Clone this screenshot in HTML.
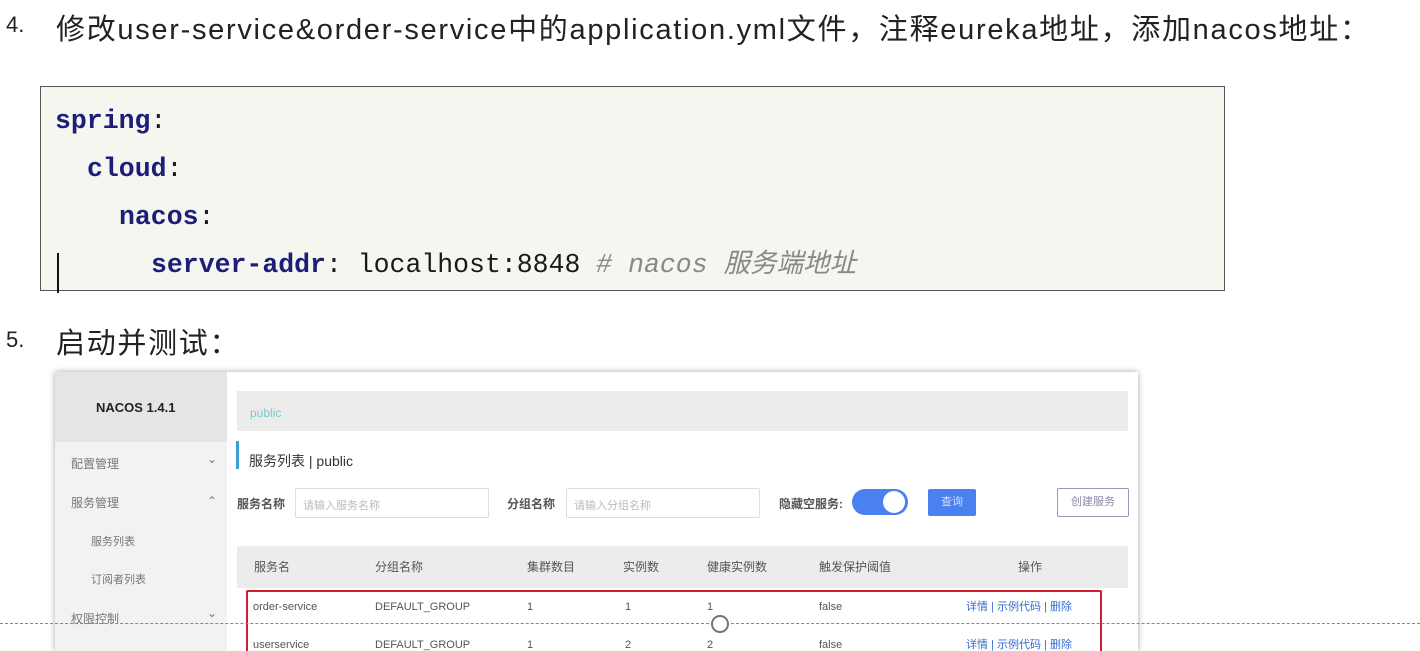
<!DOCTYPE html>
<html style="height:651px;overflow:hidden"><head><meta charset="utf-8"><style>
body{margin:0;width:1420px;height:651px;background:#fff;position:relative;overflow:hidden;font-family:"Liberation Sans","Noto Sans CJK SC",sans-serif;color:#222}
.a{position:absolute;white-space:nowrap}
.h{font-size:29px;color:#222;letter-spacing:1.7px}
.code{position:absolute;left:40px;top:86px;width:1183px;height:203px;border:1px solid #555;background:#f5f6ef}
.code div{position:absolute;font-family:"Liberation Mono","Noto Sans CJK SC",monospace;font-size:26.5px;line-height:32px;height:32px;white-space:pre;color:#1a1a1a}
.k{color:#1d1d7a;font-weight:bold}
.c{color:#888;font-style:italic}
.s{font-size:12px;color:#555;line-height:12px}
.side{color:#777;font-size:12px}
</style></head><body>
<div class="a" style="left:6px;top:12px;font-size:22px">4.</div>
<div class="a h" style="left:56px;top:6px">修改user-service&amp;order-service中的application.yml文件，注释eureka地址，添加nacos地址：</div>
<div class="code">
<div style="left:14px;top:18px"><span class="k">spring</span>:</div>
<div style="left:46px;top:66px"><span class="k">cloud</span>:</div>
<div style="left:78px;top:114px"><span class="k">nacos</span>:</div>
<div style="left:110px;top:162px"><span class="k">server-addr</span>: localhost:8848 <span class="c"># nacos 服务端地址</span></div>
<div style="left:16px;top:166px;width:2px;height:40px;background:#111"></div>
</div>
<div class="a" style="left:6px;top:327px;font-size:22px">5.</div>
<div class="a h" style="left:56px;top:320px">启动并测试：</div>

<div class="a" style="left:55px;top:372px;width:1083px;height:279px;background:#fff;box-shadow:0 0 6px rgba(0,0,0,.35)"></div>
<div class="a" style="left:55px;top:372px;width:172px;height:279px;background:#f2f2f2"></div>
<div class="a" style="left:55px;top:372px;width:172px;height:70px;background:#e5e5e5"></div>
<div class="a" style="left:96px;top:400px;font-size:13px;font-weight:bold;color:#222">NACOS 1.4.1</div>
<div class="a side" style="left:71px;top:455px">配置管理</div><div class="a side" style="left:207px;top:452px">⌄</div>
<div class="a side" style="left:71px;top:494px">服务管理</div><div class="a side" style="left:207px;top:494px">⌃</div>
<div class="a side" style="left:91px;top:533px;font-size:11px">服务列表</div>
<div class="a side" style="left:91px;top:571px;font-size:11px">订阅者列表</div>
<div class="a side" style="left:71px;top:610px">权限控制</div><div class="a side" style="left:207px;top:606px">⌄</div>

<div class="a" style="left:237px;top:391px;width:891px;height:40px;background:#ececec"></div>
<div class="a" style="left:250px;top:406px;font-size:12px;color:#7cc">public</div>
<div class="a" style="left:236px;top:441px;width:3px;height:28px;background:#3aa0d0"></div>
<div class="a" style="left:249px;top:451px;font-size:14px;color:#333">服务列表 | public</div>
<div class="a s" style="left:237px;top:498px;font-weight:bold">服务名称</div>
<div class="a" style="left:295px;top:488px;width:192px;height:28px;border:1px solid #ddd;border-radius:2px"></div>
<div class="a" style="left:303px;top:497px;font-size:11px;color:#bbb">请输入服务名称</div>
<div class="a s" style="left:507px;top:498px;font-weight:bold">分组名称</div>
<div class="a" style="left:566px;top:488px;width:192px;height:28px;border:1px solid #ddd;border-radius:2px"></div>
<div class="a" style="left:574px;top:497px;font-size:11px;color:#bbb">请输入分组名称</div>
<div class="a s" style="left:779px;top:498px;font-weight:bold">隐藏空服务:</div>
<div class="a" style="left:852px;top:489px;width:56px;height:26px;border-radius:13px;background:#4a80f0"></div>
<div class="a" style="left:883px;top:491px;width:22px;height:22px;border-radius:50%;background:#fff"></div>
<div class="a" style="left:928px;top:489px;width:48px;height:27px;background:#4a80f0;border-radius:2px;color:#dde;font-size:11px;text-align:center;line-height:27px">查询</div>
<div class="a" style="left:1057px;top:488px;width:70px;height:27px;border:1px solid #99b;border-radius:2px;color:#88a;font-size:11px;text-align:center;line-height:27px">创建服务</div>

<div class="a" style="left:237px;top:546px;width:891px;height:42px;background:#ececec"></div>
<div class="a s" style="left:254px;top:561px">服务名</div>
<div class="a s" style="left:375px;top:561px">分组名称</div>
<div class="a s" style="left:527px;top:561px">集群数目</div>
<div class="a s" style="left:623px;top:561px">实例数</div>
<div class="a s" style="left:707px;top:561px">健康实例数</div>
<div class="a s" style="left:819px;top:561px">触发保护阈值</div>
<div class="a s" style="left:1018px;top:561px">操作</div>
<div class="a" style="left:246px;top:590px;width:852px;height:61px;border:2px solid #d02030;border-bottom:none;border-radius:2px 2px 0 0"></div>
<div class="a s" style="left:253px;top:601px;font-size:11px">order-service</div>
<div class="a s" style="left:375px;top:601px;font-size:11px">DEFAULT_GROUP</div>
<div class="a s" style="left:527px;top:601px;font-size:11px">1</div>
<div class="a s" style="left:625px;top:601px;font-size:11px">1</div>
<div class="a s" style="left:707px;top:601px;font-size:11px">1</div>
<div class="a s" style="left:819px;top:601px;font-size:11px">false</div>
<div class="a s" style="left:966px;top:601px;font-size:11px;color:#3a6ad0">详情 | 示例代码 | 删除</div>
<div class="a s" style="left:253px;top:639px;font-size:11px">userservice</div>
<div class="a s" style="left:375px;top:639px;font-size:11px">DEFAULT_GROUP</div>
<div class="a s" style="left:527px;top:639px;font-size:11px">1</div>
<div class="a s" style="left:625px;top:639px;font-size:11px">2</div>
<div class="a s" style="left:707px;top:639px;font-size:11px">2</div>
<div class="a s" style="left:819px;top:639px;font-size:11px">false</div>
<div class="a s" style="left:966px;top:639px;font-size:11px;color:#3a6ad0">详情 | 示例代码 | 删除</div>
<div class="a" style="left:0;top:623px;width:1420px;border-top:1px dashed #888"></div>
<div class="a" style="left:711px;top:615px;width:14px;height:14px;border:2px solid #777;border-radius:50%;background:#fff"></div>
</body></html>
